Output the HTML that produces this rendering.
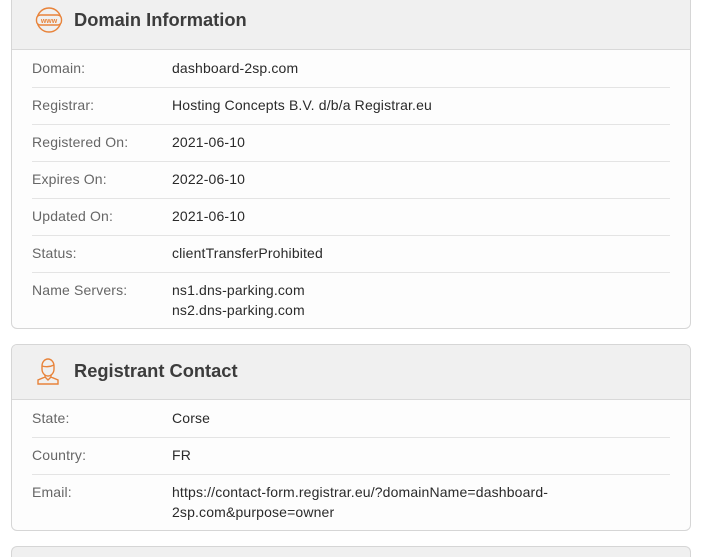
<!DOCTYPE html>
<html style="width:705px;height:557px;overflow:hidden"><head><meta charset="utf-8"><style>
*{box-sizing:border-box;margin:0;padding:0}
body{width:705px;height:557px;overflow:hidden;background:#fff;font-family:"Liberation Sans",sans-serif;position:relative}
.card{position:absolute;left:11px;width:680px;border:1px solid #d6d6d6;border-radius:6px;background:#fdfdfd;overflow:hidden}
.hd{background:#f0f0f0;border-bottom:1px solid #d9d9d9;position:relative}
.hd .t{position:absolute;left:62px;font-size:18.3px;font-weight:bold;color:#3c3c3c}
.hd svg{position:absolute;left:22px}
.row{position:absolute;left:20px;width:638px;border-top:1px solid #e4e4e4;font-size:14px;letter-spacing:0.15px}
.row:first-child{border-top:none}
.l{position:absolute;left:0;color:#666}
.v{position:absolute;left:140px;color:#2a2a2a;line-height:20px}
</style></head><body>

<div class="card" style="top:-12px;height:341px">
 <div class="hd" style="height:61px">
  <svg style="top:17px" width="30" height="28" viewBox="0 0 30 28" fill="none" stroke="#e8833a" stroke-width="1.4">
   <circle cx="15" cy="14" r="12"/><rect x="2.5" y="9" width="25" height="10" rx="4" fill="#f0f0f0"/>
   <text x="15" y="17" font-size="7" font-family="Liberation Sans" fill="#e8833a" stroke="none" text-anchor="middle" font-weight="bold">www</text>
  </svg>
  <div class="t" style="top:20px">Domain Information</div>
 </div>
 <div style="position:relative">
  <div class="row" style="top:0;height:37px"><span class="l" style="top:10px">Domain:</span><span class="v" style="top:8px">dashboard-2sp.com</span></div>
  <div class="row" style="top:37px;height:37px"><span class="l" style="top:9px">Registrar:</span><span class="v" style="top:7px">Hosting Concepts B.V. d/b/a Registrar.eu</span></div>
  <div class="row" style="top:74px;height:37px"><span class="l" style="top:9px">Registered On:</span><span class="v" style="top:7px">2021-06-10</span></div>
  <div class="row" style="top:111px;height:37px"><span class="l" style="top:9px">Expires On:</span><span class="v" style="top:7px">2022-06-10</span></div>
  <div class="row" style="top:148px;height:37px"><span class="l" style="top:9px">Updated On:</span><span class="v" style="top:7px">2021-06-10</span></div>
  <div class="row" style="top:185px;height:37px"><span class="l" style="top:9px">Status:</span><span class="v" style="top:7px">clientTransferProhibited</span></div>
  <div class="row" style="top:222px;height:57px"><span class="l" style="top:9px">Name Servers:</span><span class="v" style="top:7px">ns1.dns-parking.com<br>ns2.dns-parking.com</span></div>
 </div>
</div>

<div class="card" style="top:344px;height:187px">
 <div class="hd" style="height:55px">
  <svg style="top:12px" width="28" height="30" viewBox="0 0 28 30" fill="none" stroke="#e8833a" stroke-width="1.4">
   <path d="M8 9a6 7 0 0 1 12 0v3a6 7 0 0 1-12 0z"/><path d="M8 9c3 1 8 1 12-1"/>
   <path d="M11 18v2l-7 3v4h20v-4l-7-3v-2"/><path d="M11 20l3 3 3-3"/>
  </svg>
  <div class="t" style="top:15px">Registrant Contact</div>
 </div>
 <div style="position:relative">
  <div class="row" style="top:0;height:37px"><span class="l" style="top:10px">State:</span><span class="v" style="top:8px">Corse</span></div>
  <div class="row" style="top:37px;height:37px"><span class="l" style="top:9px">Country:</span><span class="v" style="top:7px">FR</span></div>
  <div class="row" style="top:74px;height:57px"><span class="l" style="top:9px">Email:</span><span class="v" style="top:7px">https://contact-form.registrar.eu/?domainName=dashboard-<br>2sp.com&amp;purpose=owner</span></div>
 </div>
</div>

<div class="card" style="top:546px;height:11px;background:#f0f0f0;border-bottom:none;border-radius:6px 6px 0 0"></div>
</body></html>
